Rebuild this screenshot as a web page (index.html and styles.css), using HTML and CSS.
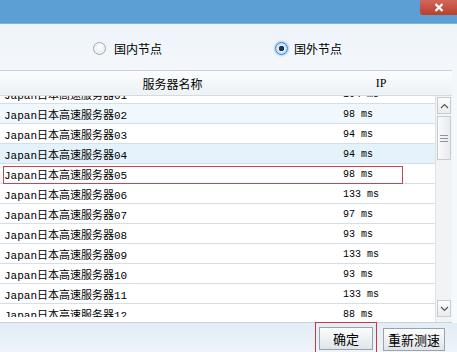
FILE: index.html
```html
<!DOCTYPE html>
<html lang="zh-CN">
<head>
    <meta charset="UTF-8">
    <title>节点选择</title>
    <link rel="stylesheet" href="styles.css">
</head>
<body>
    <div id="dialog">
        <div class="titlebar">
            <div class="close">
                <svg width="10" height="9" viewBox="0 0 10 9"><path d="M1.5 1 L8.5 8 M8.5 1 L1.5 8" stroke="#fff" stroke-width="2.2"/></svg>
            </div>
        </div>
        <div class="radios">
            <label class="radio"><span class="dot"></span>国内节点</label>
            <label class="radio checked"><span class="dot"></span>国外节点</label>
        </div>
        <div class="table">
            <div class="thead">
                <div class="th name">服务器名称</div>
                <div class="th ip">IP</div>
            </div>
            <div class="tbody">
                <div class="rows">
                    <div class="row first"><span class="name">Japan日本高速服务器01</span><span class="ip">104 ms</span></div>
                    <div class="row light"><span class="name">Japan日本高速服务器02</span><span class="ip">98 ms</span></div>
                    <div class="row"><span class="name">Japan日本高速服务器03</span><span class="ip">94 ms</span></div>
                    <div class="row hover"><span class="name">Japan日本高速服务器04</span><span class="ip">94 ms</span></div>
                    <div class="row marked"><span class="name">Japan日本高速服务器05</span><span class="ip">98 ms</span></div>
                    <div class="row"><span class="name">Japan日本高速服务器06</span><span class="ip">133 ms</span></div>
                    <div class="row"><span class="name">Japan日本高速服务器07</span><span class="ip">97 ms</span></div>
                    <div class="row"><span class="name">Japan日本高速服务器08</span><span class="ip">93 ms</span></div>
                    <div class="row"><span class="name">Japan日本高速服务器09</span><span class="ip">133 ms</span></div>
                    <div class="row"><span class="name">Japan日本高速服务器10</span><span class="ip">93 ms</span></div>
                    <div class="row"><span class="name">Japan日本高速服务器11</span><span class="ip">133 ms</span></div>
                    <div class="row"><span class="name">Japan日本高速服务器12</span><span class="ip">88 ms</span></div>
                </div>
                <div class="scrollbar">
                    <div class="arrow up">
                        <svg width="9" height="6" viewBox="0 0 9 6"><path d="M1 5 L4.5 1.5 L8 5" fill="none" stroke="#555" stroke-width="1.2"/></svg>
                    </div>
                    <div class="thumb"><span></span><span></span><span></span></div>
                    <div class="track"></div>
                    <div class="arrow down">
                        <svg width="9" height="6" viewBox="0 0 9 6"><path d="M1 1 L4.5 4.5 L8 1" fill="none" stroke="#555" stroke-width="1.2"/></svg>
                    </div>
                </div>
            </div>
        </div>
        <div class="footer">
            <div class="focus"><button>确定</button></div>
            <button>重新测速</button>
        </div>
    </div>
</body>
</html>
```

FILE: styles.css
```css
body {
    margin: 0;
    width: 457px;
    height: 352px;
    overflow: hidden;
    font-family: "Noto Sans CJK SC", sans-serif;
    font-size: 12px;
    color: #000;
}

#dialog {
    height: 352px;
    background: linear-gradient(#e8f1f9, #f3f7fb 60px, #f7fafc);
    display: flex;
    flex-direction: column;
}

.titlebar {
    height: 24px;
    background: #5b9fd4;
    border-bottom: 1px solid #7fb3dd;
    display: flex;
    justify-content: flex-end;
}

.close {
    width: 37px;
    height: 15px;
    background: linear-gradient(#d0675a, #b9402f);
    display: flex;
    align-items: center;
    padding-left: 14px;
    box-sizing: border-box;
    border-radius: 0 0 0 3px;
}

.radios {
    height: 47px;
    display: flex;
    align-items: center;
    padding-left: 93px;
    box-sizing: border-box;
    padding-top: 2px;
}

.radio {
    display: flex;
    align-items: center;
    gap: 8px;
    width: 188px;
}

.checked {
    gap: 6px;
}

.dot {
    width: 11px;
    height: 11px;
    border-radius: 50%;
    border: 1px solid #a5a9ad;
    background: radial-gradient(circle at 50% 35%, #fff, #e2e4e6);
}

.checked .dot {
    border-color: #3f83c2;
    background: radial-gradient(circle, #2a3440 0 2.5px, #dfeefa 3px, #9cc6ea);
    box-shadow: 0 0 2px 1px #a9d2f2;
}

.table {
    margin-right: 5px;
}

.thead {
    height: 24px;
    border-top: 1px solid #c8d3dd;
    border-bottom: 1px solid #d3dce4;
    background: linear-gradient(#fbfcfd, #eef2f5);
    display: flex;
    align-items: center;
}

.th.name {
    width: 345px;
    text-align: center;
}

.th.ip {
    width: 72px;
    text-align: center;
    font-family: "Liberation Serif", serif;
}

.tbody {
    height: 226px;
    display: flex;
    background: #fff;
    border-bottom: 1px solid #c8d3dd;
    overflow: hidden;
}

.rows {
    width: 436px;
    height: 221px;
    overflow: hidden;
}

.row {
    height: 19px;
    border-bottom: 1px solid #d4dee6;
    display: flex;
    align-items: center;
    font-family: "Liberation Mono", "Noto Sans CJK SC", monospace;
    font-size: 11px;
    position: relative;
}

.row.first {
    margin-top: -12px;
}

.row.light {
    background: #f1f8fd;
}

.row.hover {
    background: #e4f2fb;
}

.row.marked::after {
    content: "";
    position: absolute;
    left: 3px;
    top: 2px;
    width: 398px;
    height: 16px;
    border: 1px solid #c3474c;
}

.row .name {
    width: 339px;
    padding-left: 4px;
}

.row .ip {
    font-size: 10px;
    padding-top: 2px;
}

.scrollbar {
    width: 16px;
    background: #f1f3f5;
    border-left: 1px solid #dde3e8;
    display: flex;
    flex-direction: column;
}

.arrow {
    height: 15px;
    margin: 1px 1px 0;
    border: 1px solid #c6ccd2;
    background: linear-gradient(#fdfdfd, #e9ecef);
    display: flex;
    align-items: center;
    justify-content: center;
}

.arrow.down {
    margin: 0 1px 5px;
}

.thumb {
    height: 42px;
    margin: 2px 1px 0;
    border: 1px solid #c6ccd2;
    background: linear-gradient(90deg, #f9fafb, #e8ebee);
    display: flex;
    flex-direction: column;
    align-items: center;
    justify-content: center;
    gap: 2px;
}

.thumb span {
    width: 8px;
    height: 1px;
    background: #8c939a;
}

.track {
    flex: 1;
}

.footer {
    flex: 1;
    display: flex;
    justify-content: flex-end;
    align-items: flex-start;
    gap: 6px;
    padding-right: 12px;
    background: linear-gradient(#e3edf6, #eef4f9);
}

.focus {
    border: 1px solid #c8393f;
    border-bottom: none;
    padding: 4px 3px 0;
    height: 30px;
    box-sizing: border-box;
    margin-top: -1px;
}

button {
    font-family: "Noto Sans CJK SC", sans-serif;
    font-size: 13px;
    height: 23px;
    margin-top: 5px;
    padding: 0 4px;
    border: 1px solid #9aa3ab;
    background: linear-gradient(#fbfcfc, #e1e5e9);
    color: #000;
    line-height: 20px;
}

.focus button {
    margin-top: 0;
    width: 54px;
}
```
